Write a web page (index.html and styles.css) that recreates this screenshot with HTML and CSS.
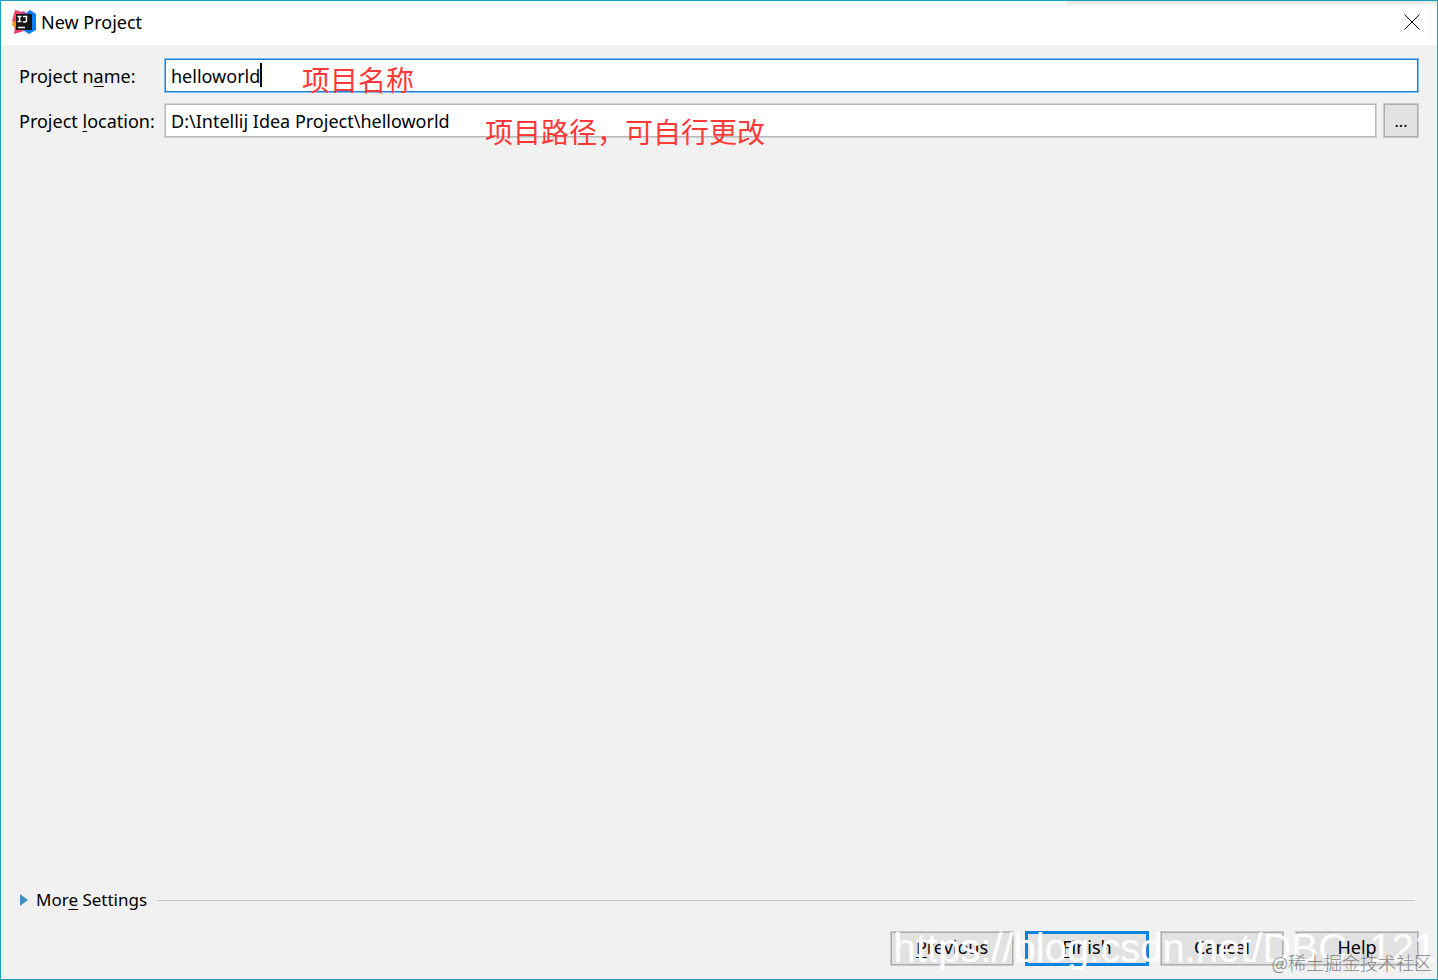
FILE: index.html
```
<!DOCTYPE html>
<html lang="en">
<head>
    <meta charset="UTF-8">
    <meta name="viewport" content="width=device-width, initial-scale=1.0">
    <title>New Project</title>
    <link rel="stylesheet" href="styles.css">
</head>
<body>
    <div class="window">
        <header class="titlebar">
            <svg class="logo" viewBox="0 0 24 24" aria-hidden="true">
                <path fill="#ff9419" d="M1 10 0 15l4 4 3-8z"/>
                <path fill="#fe3f68" d="M3 0 10 2 9 12 0 11zM3 16l-1 8 10-3-4-6z"/>
                <path fill="#087cfa" d="M14 3 18 0l6 4v16l-7 4-6-4z"/>
                <path fill="#b64ba0" d="M9 2l3-1 3 3H8z"/>
                <path class="logo-face" d="M4 4h16v16H4z"/>
                <path class="logo-lines" d="M5.500 6.500h4M7.500 6v6M5.500 11.500h4M11 6.500h3.500v4q0 1.500-2 1.500h-1.500M6 17.500h7"/>
            </svg>
            <h1>New Project</h1>
            <button type="button" class="close" aria-label="Close">
                <svg viewBox="0 0 16 16" aria-hidden="true"><path d="M.5.5l15 15M15.500.5l-15 15"/></svg>
            </button>
        </header>

        <form class="content">
            <div class="fields">
                <label for="name">Project n<u>a</u>me:</label>
                <div class="field">
                    <input type="text" id="name" class="active" value="helloworld">
                    <span class="caret"></span>
                    <span class="note note-name">项目名称</span>
                </div>
                <label for="location">Project <u>l</u>ocation:</label>
                <div class="field">
                    <input type="text" id="location" value="D:\Intellij Idea Project\helloworld">
                    <button type="button" class="browse" aria-label="Browse">...</button>
                    <span class="note note-location">项目路径，可自行更改</span>
                </div>
            </div>

            <div class="more">
                <button type="button" class="more-toggle">
                    <svg viewBox="0 0 8 12" aria-hidden="true"><path d="M0 0l8 6-8 6z"/></svg>
                    <span>Mor<u>e</u> Settings</span>
                </button>
                <hr>
            </div>

            <div class="actions">
                <button type="button"><span><u>P</u>revious</span></button>
                <button type="button" class="primary"><span><u>F</u>inish</span></button>
                <button type="button">Cancel</button>
                <button type="button">Help</button>
            </div>
        </form>

        <div class="watermark">https://blog.csdn.net/DBC_121</div>
        <div class="community">@稀土掘金技术社区</div>
    </div>
</body>
</html>
```
FILE: styles.css
```
* {
    box-sizing: border-box;
}
body {
    margin: 0;
    font-family: "Noto Sans", "Noto Sans CJK SC", sans-serif;
    font-size: 18px;
    line-height: 24px;
    color: #000;
}
.window {
    position: relative;
    display: flex;
    flex-direction: column;
    min-height: 100vh;
    background: #f1f1f1;
    border: 1px solid #18a0bd;
    overflow: hidden;
}
.titlebar {
    display: flex;
    align-items: center;
    gap: 5px;
    height: 44px;
    padding: 0 17px 2px 11px;
    background: #fff;
}
/* soft shadow falling on the right end of the title bar */
.titlebar::after {
    content: "";
    position: absolute;
    top: 0;
    right: 0;
    width: 370px;
    height: 6px;
    background: linear-gradient(#e4e4e4, #fff);
}
.logo {
    width: 24px;
    height: 24px;
}
.logo-face {
    fill: #171717;
}
.logo-lines {
    fill: none;
    stroke: #fff;
    stroke-width: 1.5;
}
h1 {
    margin: 0;
    font-size: 18px;
    font-weight: normal;
}
button, input {
    font: inherit;
    color: inherit;
}
.close {
    display: flex;
    margin-left: auto;
    padding: 0;
    border: none;
    background: none;
}
.close svg {
    width: 16px;
    height: 16px;
    fill: none;
    stroke: #000;
}
.content {
    display: flex;
    flex: 1;
    flex-direction: column;
    padding: 13px 18px;
}
.fields {
    display: grid;
    grid-template-columns: 138px 1fr;
    align-items: center;
    gap: 10px 7px;
    white-space: nowrap;
}
.field {
    position: relative;
    display: flex;
    gap: 6px;
}
input {
    flex: 1;
    min-width: 0;
    height: 35px;
    padding: 0 6px;
    border: 1px solid #d2d2d2;
    box-shadow: inset 0 0 0 1px #b8b8b8;
    background: #fff;
    outline: none;
}
input.active {
    border-color: #7fbcec;
    box-shadow: inset 0 0 0 1px #1683d8;
}
u {
    text-decoration-thickness: 1px;
    text-underline-offset: 3px;
}
.caret {
    position: absolute;
    top: 5px;
    left: 96px;
    width: 2px;
    height: 24px;
    background: #000;
}
.note {
    position: absolute;
    font-family: "Noto Sans CJK SC", sans-serif;
    font-size: 28px;
    line-height: 36px;
    color: #ff3838;
    pointer-events: none;
}
.note-name {
    top: 3px;
    left: 138px;
}
.note-location {
    top: 10px;
    left: 321px;
}
.browse, .actions button {
    height: 35px;
    padding: 0;
    border: 1px solid #c8c8c8;
    box-shadow: inset 0 0 0 1px #adadad;
    background: #e2e2e2;
}
.browse {
    width: 36px;
    font-size: 16px;
}
.more {
    display: flex;
    align-items: center;
    gap: 10px;
    margin-top: auto;
    padding-right: 4px;
}
.more-toggle {
    display: flex;
    align-items: center;
    gap: 8px;
    padding: 0 0 0 1px;
    border: none;
    background: none;
    font-size: 17px;
}
.more-toggle svg {
    width: 8px;
    height: 12px;
    fill: #4393c1;
}
hr {
    flex: 1;
    margin: 0;
    border: none;
    border-top: 1px solid #c9c9c9;
}
.actions {
    display: flex;
    justify-content: flex-end;
    gap: 11px;
    margin-top: 19px;
}
.actions button {
    width: 124px;
    padding-bottom: 3px;
}
.actions .primary {
    border: 3px solid #0a84df;
    box-shadow: none;
}
.watermark, .community {
    position: absolute;
    white-space: nowrap;
    pointer-events: none;
}
.watermark {
    right: 1px;
    bottom: 8px;
    font-family: "Liberation Sans", sans-serif;
    font-size: 40px;
    line-height: 46px;
    color: #fff;
}
.community {
    right: 5px;
    bottom: 5px;
    font-family: "Noto Sans CJK SC", sans-serif;
    font-size: 18px;
    font-weight: 300;
    color: #858585;
}
```
